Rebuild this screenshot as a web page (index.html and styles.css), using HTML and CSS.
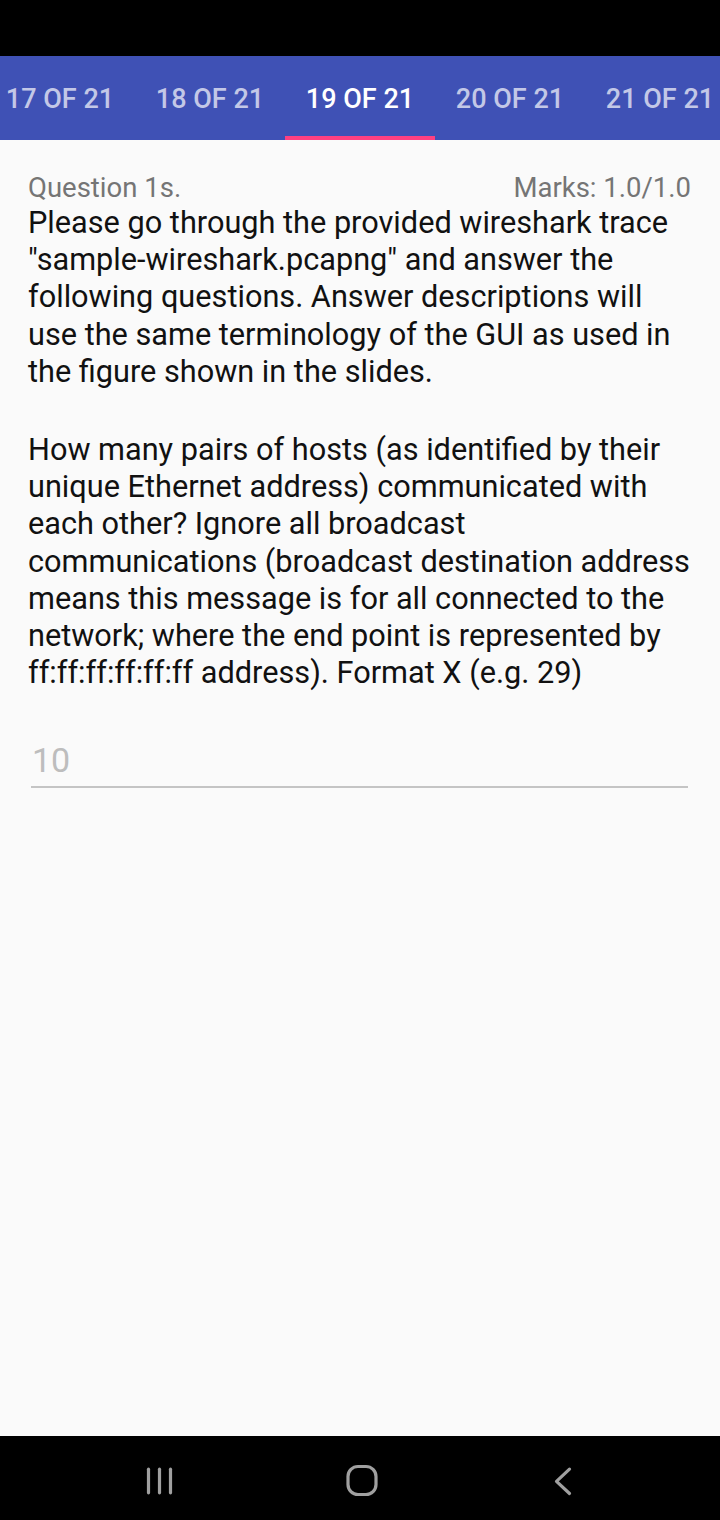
FILE: index.html
```html
<!DOCTYPE html>
<html>
<head>
<meta charset="utf-8">
<link rel="stylesheet" href="styles.css">
</head>
<body>
<div class="screen">
  <div class="status"></div>
  <div class="tabs">
    <div class="tab-row">
      <div class="tab">17 OF 21</div>
      <div class="tab">18 OF 21</div>
      <div class="tab active">19 OF 21</div>
      <div class="tab">20 OF 21</div>
      <div class="tab">21 OF 21</div>
    </div>
  </div>
  <main class="content">
    <div class="qhead">
      <span>Question 1s.</span>
      <span>Marks: 1.0/1.0</span>
    </div>
    <p class="qtext">Please go through the provided wireshark trace "sample-wireshark.pcapng" and answer the following questions. Answer descriptions will use the same terminology of the GUI as used in the figure shown in the slides.</p>
    <p class="qtext gap">How many pairs of hosts (as identified by their unique Ethernet address) communicated with each other? Ignore all broadcast communications (broadcast destination address means this message is for all connected to the network; where the end point is represented by ff:ff:ff:ff:ff:ff address). Format X (e.g. 29)</p>
    <div class="answer">10</div>
  </main>
  <nav class="navbar">
    <svg class="nav-icon" width="40" height="40" viewBox="0 0 40 40"><g stroke="#a0a0a0" stroke-width="3.2" stroke-linecap="round"><line x1="7.5" y1="11.2" x2="7.5" y2="34.8"/><line x1="18.5" y1="11.2" x2="18.5" y2="34.8"/><line x1="29.5" y1="11.2" x2="29.5" y2="34.8"/></g></svg>
    <svg class="nav-icon" width="40" height="40" viewBox="0 0 40 40"><rect x="6" y="8.5" width="28" height="28" rx="10" fill="none" stroke="#a0a0a0" stroke-width="3.2"/></svg>
    <svg class="nav-icon" width="40" height="40" viewBox="0 0 40 40"><polyline points="27.5,11.2 14.5,23.3 27.5,35.5" fill="none" stroke="#a0a0a0" stroke-width="3.2" stroke-linecap="round" stroke-linejoin="round"/></svg>
  </nav>
</div>
</body>
</html>
```
FILE: styles.css
```css
html, body {
  margin: 0;
  padding: 0;
}
body {
  font-family: Roboto, "Noto Sans", sans-serif;
  background: #fafafa;
}
.screen {
  width: 720px;
  height: 1520px;
  display: flex;
  flex-direction: column;
  overflow: hidden;
}
.status {
  height: 56px;
  background: #000;
  flex: none;
}
.tabs {
  height: 84px;
  background: #3f51b5;
  flex: none;
  overflow: hidden;
}
.tab-row {
  display: flex;
  margin-left: -15px;
  height: 100%;
}
.tab {
  flex: none;
  width: 150px;
  box-sizing: border-box;
  display: flex;
  align-items: center;
  justify-content: center;
  font-size: 27px;
  font-weight: 500;
  color: rgba(255, 255, 255, 0.7);
  padding-top: 6px;
  border-bottom: 4px solid transparent;
}
.tab.active {
  color: #fff;
  border-bottom-color: #ff4081;
}
.content {
  flex: 1;
  padding: 31px 29px 0 28px;
}
.qhead {
  display: flex;
  justify-content: space-between;
  font-size: 27.5px;
  color: #757575;
  line-height: 33px;
}
.qtext {
  margin: 0;
  font-size: 30.7px;
  line-height: 37.2px;
  color: #111;
}
.qtext.gap {
  margin-top: 41px;
}
.answer {
  margin: 49px 3px 0 3px;
  font-size: 34px;
  color: #bdbdbd;
  padding: 0 0 6px 1px;
  border-bottom: 2px solid #c4c4c4;
  line-height: 40px;
}
.navbar {
  height: 84px;
  background: #000;
  flex: none;
  display: flex;
  align-items: center;
  justify-content: space-between;
  padding: 0 138px 0 141px;
}
.nav-icon {
  display: block;
}
```
